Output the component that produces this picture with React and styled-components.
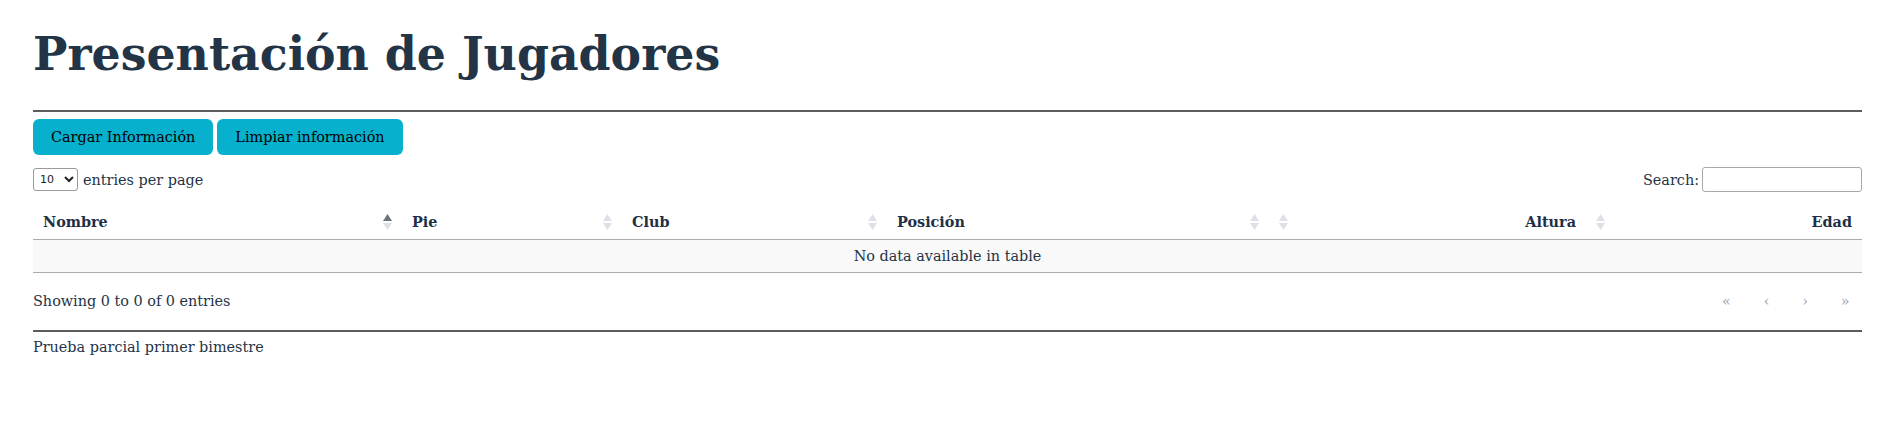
import React from "react";
import styled, { createGlobalStyle } from "styled-components";

const Global = createGlobalStyle`
  html, body { margin: 0; padding: 0; background: #fff; }
  body {
    font-family: "DejaVu Serif", serif;
    font-size: 14.4px;
    color: #243447;
  }
`;

const Page = styled.div`
  margin: 0 37px 0 33px;
`;

const Title = styled.h1`
  margin: 26px 0 28px;
  font-size: 45.8px;
  line-height: 56px;
  font-weight: bold;
  color: #233447;
`;

const Rule = styled.hr`
  margin: 0;
  border: 0;
  border-top: 2px solid #5c5c5c;
  height: 0;
`;

const Actions = styled.div`
  display: flex;
  gap: 4px;
  margin-top: 7px;
`;

const Button = styled.button`
  height: 36px;
  padding: 0 18px;
  border: 0;
  border-radius: 6px;
  background: #07b1cd;
  color: #000;
  font-family: "DejaVu Serif", serif;
  font-size: 14.4px;
  cursor: pointer;
`;

const Controls = styled.div`
  display: flex;
  justify-content: space-between;
  align-items: center;
  margin-top: 12px;
  height: 25px;
`;

const Length = styled.label`
  display: flex;
  align-items: center;
  gap: 5px;
`;

const Select = styled.select`
  width: 45px;
  height: 23px;
  font-family: "DejaVu Sans", sans-serif;
  font-size: 11px;
  border: 1px solid #9a9a9a;
  border-radius: 3px;
  background: #fff;
  color: #222;
  padding: 0 2px;
`;

const SearchLabel = styled.label`
  display: flex;
  align-items: center;
  gap: 3px;
`;

const Input = styled.input`
  width: 160px;
  height: 25px;
  box-sizing: border-box;
  border: 1px solid #a8a8a8;
  border-radius: 3px;
  padding: 2px 4px;
`;

const Table = styled.table`
  width: 100%;
  margin-top: 11px;
  border-collapse: collapse;
  table-layout: fixed;
`;

const Th = styled.th`
  padding: 10px 10px 9px;
  line-height: 17px;
  font-weight: bold;
  border-bottom: 1px solid #acacac;
  color: #1f3045;
`;

const HeadInner = styled.div`
  display: flex;
  align-items: center;
  justify-content: space-between;
  flex-direction: ${(p) => (p.$numeric ? "row-reverse" : "row")};
`;

const Td = styled.td`
  padding: 8px 10px 7px;
  line-height: 17px;
  text-align: center;
  background: #f9f9f9;
  border-bottom: 1px solid #acacac;
`;

const Footer = styled.div`
  display: flex;
  justify-content: space-between;
  align-items: center;
  margin-top: 19px;
  line-height: 17px;
`;

const Paging = styled.nav`
  display: flex;
  margin-right: -3px;
`;

const PageButton = styled.span`
  box-sizing: border-box;
  min-width: 21.6px;
  padding: 0 14.4px;
  margin-left: 2px;
  border: 1px solid transparent;
  color: #9ea6b4;
  text-align: center;
`;

const BottomRule = styled(Rule)`
  margin-top: 19px;
`;

const Note = styled.p`
  margin: 7px 0 0;
  line-height: 17px;
`;

function SortIcon({ active }) {
  return (
    <svg width="9" height="16" viewBox="0 0 9 16" style={{ flex: "none" }}>
      <polygon points="4.5,0 9,7 0,7" fill={active === "asc" ? "#6c7481" : "#dde0e6"} />
      <polygon points="0,9 9,9 4.5,16" fill="#dde0e6" />
    </svg>
  );
}

const columns = [
  { label: "Nombre", width: 369, active: "asc" },
  { label: "Pie", width: 220 },
  { label: "Club", width: 265 },
  { label: "Posición", width: 382 },
  { label: "Altura", width: 317, numeric: true },
  { label: "Edad", width: 276, numeric: true },
];

export default function App() {
  return (
    <Page>
      <Global />
      <Title>Presentación de Jugadores</Title>
      <Rule />
      <Actions>
        <Button>Cargar Información</Button>
        <Button>Limpiar información</Button>
      </Actions>
      <Controls>
        <Length>
          <Select defaultValue="10">
            <option value="10">10</option>
            <option value="25">25</option>
            <option value="50">50</option>
          </Select>
          entries per page
        </Length>
        <SearchLabel>
          Search:
          <Input type="search" />
        </SearchLabel>
      </Controls>
      <Table>
        <colgroup>
          {columns.map((c) => (
            <col key={c.label} style={{ width: c.width }} />
          ))}
        </colgroup>
        <thead>
          <tr>
            {columns.map((c) => (
              <Th key={c.label}>
                <HeadInner $numeric={c.numeric}>
                  <span>{c.label}</span>
                  <SortIcon active={c.active} />
                </HeadInner>
              </Th>
            ))}
          </tr>
        </thead>
        <tbody>
          <tr>
            <Td colSpan={6}>No data available in table</Td>
          </tr>
        </tbody>
      </Table>
      <Footer>
        <span>Showing 0 to 0 of 0 entries</span>
        <Paging>
          <PageButton>«</PageButton>
          <PageButton>‹</PageButton>
          <PageButton>›</PageButton>
          <PageButton>»</PageButton>
        </Paging>
      </Footer>
      <BottomRule />
      <Note>Prueba parcial primer bimestre</Note>
    </Page>
  );
}
